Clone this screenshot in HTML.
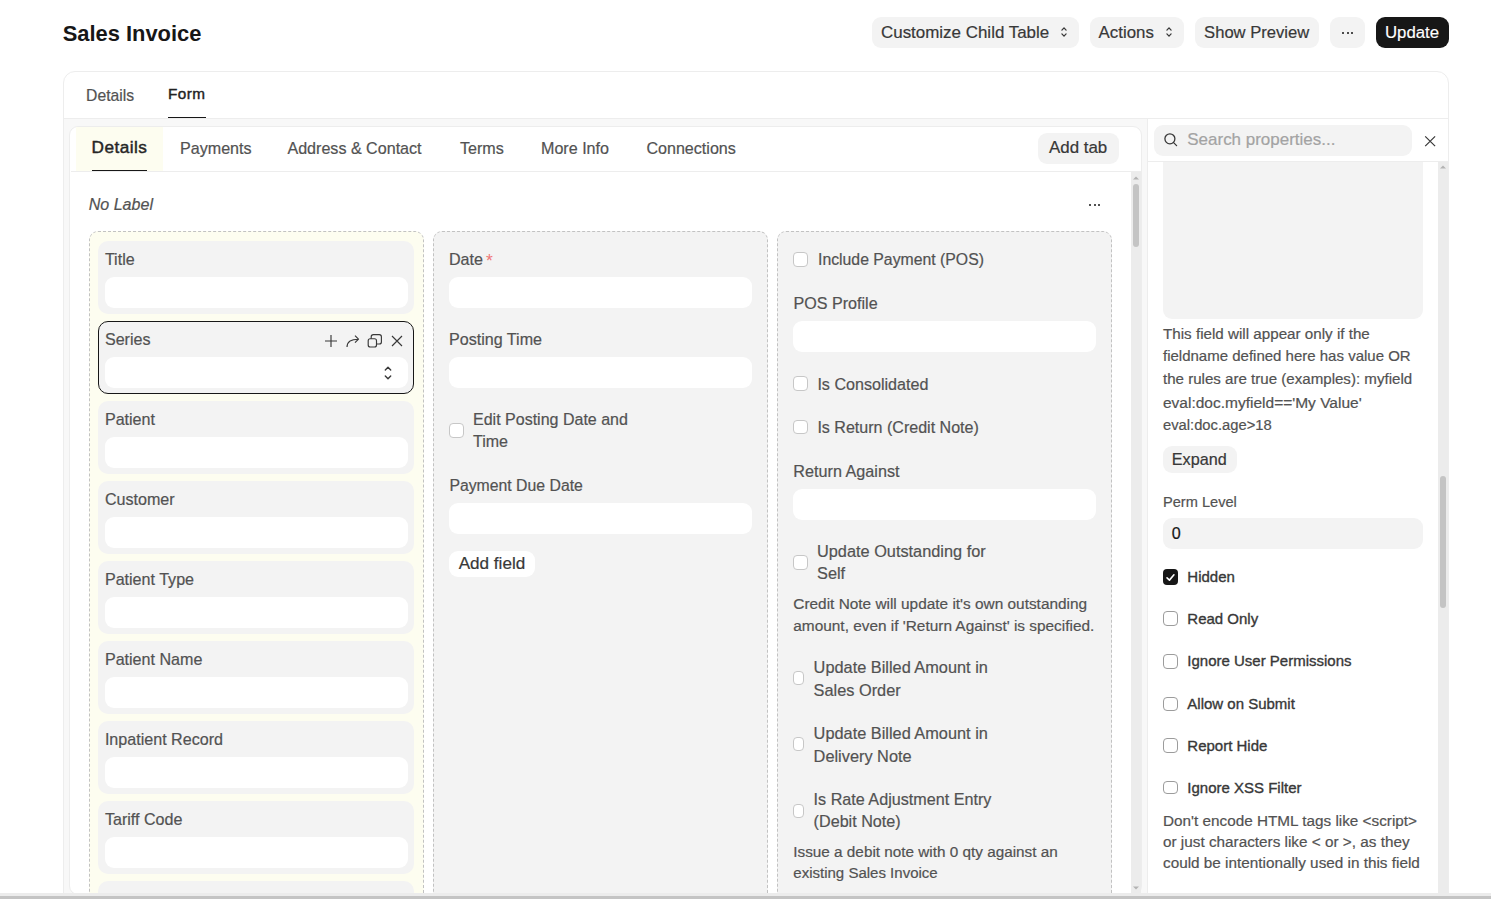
<!DOCTYPE html>
<html><head><meta charset="utf-8"><style>
html,body{margin:0;padding:0;}
body{width:1491px;height:899px;overflow:hidden;position:relative;background:#fff;font-family:"Liberation Sans",sans-serif;}
.t{position:absolute;white-space:nowrap;}
.b{position:absolute;}
</style></head><body>
<div class="t" style="left:62.70px;top:19.52px;font-size:21.9px;line-height:27.38px;color:#171717;font-weight:700;">Sales Invoice</div>
<div class="b" style="left:872.00px;top:17.00px;width:206.50px;height:31.00px;background:#f3f3f3;border-radius:9px;"></div>
<div class="t" style="left:881.00px;top:21.53px;font-size:16.95px;line-height:21.19px;color:#383838;-webkit-text-stroke:0.2px #383838;">Customize Child Table</div>
<svg class="b" style="left:1058.6px;top:25.299999999999997px" width="10" height="14" viewBox="0 0 10 14"><path d="M2.9 5.1 L5 2.8 L7.1 5.1 M2.9 8.9 L5 11.2 L7.1 8.9" fill="none" stroke="#383838" stroke-width="1.25" stroke-linecap="round" stroke-linejoin="round"/></svg>
<div class="b" style="left:1090.20px;top:17.00px;width:93.50px;height:31.00px;background:#f3f3f3;border-radius:9px;"></div>
<div class="t" style="left:1098.60px;top:21.63px;font-size:16.85px;line-height:21.06px;color:#383838;-webkit-text-stroke:0.2px #383838;">Actions</div>
<svg class="b" style="left:1163.6px;top:25.299999999999997px" width="10" height="14" viewBox="0 0 10 14"><path d="M2.9 5.1 L5 2.8 L7.1 5.1 M2.9 8.9 L5 11.2 L7.1 8.9" fill="none" stroke="#383838" stroke-width="1.25" stroke-linecap="round" stroke-linejoin="round"/></svg>
<div class="b" style="left:1195.20px;top:17.00px;width:123.60px;height:31.00px;background:#f3f3f3;border-radius:9px;"></div>
<div class="t" style="left:1204.10px;top:22.97px;font-size:16.6px;line-height:20.75px;color:#383838;-webkit-text-stroke:0.2px #383838;">Show Preview</div>
<div class="b" style="left:1330.30px;top:17.00px;width:34.40px;height:31.00px;background:#f3f3f3;border-radius:9px;"></div>
<div class="b" style="left:1342.45px;top:31.85px;width:1.90px;height:1.90px;background:#171717;border-radius:50%;"></div>
<div class="b" style="left:1346.75px;top:31.85px;width:1.90px;height:1.90px;background:#171717;border-radius:50%;"></div>
<div class="b" style="left:1351.15px;top:31.85px;width:1.90px;height:1.90px;background:#171717;border-radius:50%;"></div>
<div class="b" style="left:1376.10px;top:17.00px;width:72.70px;height:31.00px;background:#171717;border-radius:9px;"></div>
<div class="t" style="left:1385.00px;top:22.38px;font-size:16.8px;line-height:21.0px;color:#ffffff;-webkit-text-stroke:0.15px #ffffff;">Update</div>
<div class="b" style="left:63.00px;top:71.00px;width:1386.00px;height:889.00px;background:#ffffff;border:1px solid #ededed;border-radius:12px;box-sizing:border-box;"></div>
<div class="b" style="left:64.00px;top:119.00px;width:1384.00px;height:841.00px;background:#f8f8f8;"></div>
<div class="b" style="left:64.00px;top:118.00px;width:1384.00px;height:1.00px;background:#ededed;"></div>
<div class="t" style="left:86.10px;top:85.95px;font-size:15.7px;line-height:19.62px;color:#525252;-webkit-text-stroke:0.2px #525252;">Details</div>
<div class="t" style="left:168.00px;top:84.34px;font-size:15.3px;line-height:19.12px;color:#222222;-webkit-text-stroke:0.4px #222222;letter-spacing:0.45px;">Form</div>
<div class="b" style="left:168.00px;top:116.80px;width:38.00px;height:1.20px;background:#171717;"></div>
<div class="b" style="left:69.20px;top:125.60px;width:1072.80px;height:769.40px;background:#ffffff;border:1px solid #ededed;border-radius:9px;box-sizing:border-box;"></div>
<div class="b" style="left:71.00px;top:170.80px;width:1070.00px;height:1.00px;background:#ededed;"></div>
<div class="b" style="left:76.00px;top:126.60px;width:87.00px;height:44.20px;background:#fdfdf0;"></div>
<div class="t" style="left:91.60px;top:136.99px;font-size:17.2px;line-height:21.5px;color:#262626;-webkit-text-stroke:0.45px #262626;letter-spacing:0.45px;">Details</div>
<div class="b" style="left:92.00px;top:169.60px;width:55.00px;height:1.30px;background:#171717;"></div>
<div class="t" style="left:180.00px;top:138.36px;font-size:16.1px;line-height:20.12px;color:#525252;-webkit-text-stroke:0.2px #525252;">Payments</div>
<div class="t" style="left:287.40px;top:138.36px;font-size:16.1px;line-height:20.12px;color:#525252;-webkit-text-stroke:0.2px #525252;">Address &amp; Contact</div>
<div class="t" style="left:460.00px;top:138.36px;font-size:16.1px;line-height:20.12px;color:#525252;-webkit-text-stroke:0.2px #525252;">Terms</div>
<div class="t" style="left:541.00px;top:138.36px;font-size:16.1px;line-height:20.12px;color:#525252;-webkit-text-stroke:0.2px #525252;">More Info</div>
<div class="t" style="left:646.40px;top:138.36px;font-size:16.1px;line-height:20.12px;color:#525252;-webkit-text-stroke:0.2px #525252;">Connections</div>
<div class="b" style="left:1038.30px;top:133.30px;width:80.50px;height:30.40px;background:#f3f3f3;border-radius:9px;"></div>
<div class="t" style="left:1049.00px;top:137.18px;font-size:16.9px;line-height:21.12px;color:#383838;-webkit-text-stroke:0.2px #383838;">Add tab</div>
<div class="b" style="left:1131.00px;top:171.80px;width:10.00px;height:721.20px;background:#ececec;"></div>
<svg class="b" style="left:1131px;top:174px" width="10" height="8"><path d="M2 5.5 L5 2.5 L8 5.5 Z" fill="#b3b3b3"/></svg>
<svg class="b" style="left:1131px;top:884px" width="10" height="8"><path d="M2 2.5 L5 5.5 L8 2.5 Z" fill="#b3b3b3"/></svg>
<div class="b" style="left:1133.20px;top:183.70px;width:5.70px;height:63.00px;background:#c4c4c4;border-radius:3px;"></div>
<div class="t" style="left:88.70px;top:194.39px;font-size:16.07px;line-height:20.09px;color:#525252;font-style:italic;-webkit-text-stroke:0.2px #525252;">No Label</div>
<div class="b" style="left:1089.35px;top:203.75px;width:2.10px;height:2.10px;background:#171717;border-radius:50%;"></div>
<div class="b" style="left:1093.70px;top:203.75px;width:2.10px;height:2.10px;background:#171717;border-radius:50%;"></div>
<div class="b" style="left:1098.15px;top:203.75px;width:2.10px;height:2.10px;background:#171717;border-radius:50%;"></div>
<div class="b" style="left:89.40px;top:231.40px;width:335.00px;height:728.60px;background:#fdfdf0;border:1px dashed #c2c2c2;border-radius:9px;box-sizing:border-box;"></div>
<div class="b" style="left:433.40px;top:231.40px;width:335.00px;height:728.60px;background:#f3f3f3;border:1px dashed #c2c2c2;border-radius:9px;box-sizing:border-box;"></div>
<div class="b" style="left:777.40px;top:231.40px;width:335.00px;height:728.60px;background:#f3f3f3;border:1px dashed #c2c2c2;border-radius:9px;box-sizing:border-box;"></div>
<div class="b" style="left:98.00px;top:241.00px;width:316.00px;height:72.60px;background:#f3f3f3;border-radius:10px;"></div>
<div class="t" style="left:104.90px;top:249.46px;font-size:16.1px;line-height:20.12px;color:#525252;-webkit-text-stroke:0.2px #525252;">Title</div>
<div class="b" style="left:105.00px;top:277.00px;width:303.00px;height:31.00px;background:#ffffff;border-radius:9px;"></div>
<div class="b" style="left:98.00px;top:321.40px;width:316.00px;height:72.60px;background:#f3f3f3;border:1.4px solid #171717;border-radius:10px;box-sizing:border-box;"></div>
<div class="t" style="left:104.90px;top:329.46px;font-size:16.1px;line-height:20.12px;color:#525252;-webkit-text-stroke:0.2px #525252;">Series</div>
<div class="b" style="left:105.00px;top:357.00px;width:303.00px;height:31.00px;background:#ffffff;border-radius:9px;"></div>
<div class="b" style="left:98.00px;top:401.00px;width:316.00px;height:72.60px;background:#f3f3f3;border-radius:10px;"></div>
<div class="t" style="left:104.90px;top:409.46px;font-size:16.1px;line-height:20.12px;color:#525252;-webkit-text-stroke:0.2px #525252;">Patient</div>
<div class="b" style="left:105.00px;top:437.00px;width:303.00px;height:31.00px;background:#ffffff;border-radius:9px;"></div>
<div class="b" style="left:98.00px;top:481.00px;width:316.00px;height:72.60px;background:#f3f3f3;border-radius:10px;"></div>
<div class="t" style="left:104.90px;top:489.46px;font-size:16.1px;line-height:20.12px;color:#525252;-webkit-text-stroke:0.2px #525252;">Customer</div>
<div class="b" style="left:105.00px;top:517.00px;width:303.00px;height:31.00px;background:#ffffff;border-radius:9px;"></div>
<div class="b" style="left:98.00px;top:561.00px;width:316.00px;height:72.60px;background:#f3f3f3;border-radius:10px;"></div>
<div class="t" style="left:104.90px;top:569.46px;font-size:16.1px;line-height:20.12px;color:#525252;-webkit-text-stroke:0.2px #525252;">Patient Type</div>
<div class="b" style="left:105.00px;top:597.00px;width:303.00px;height:31.00px;background:#ffffff;border-radius:9px;"></div>
<div class="b" style="left:98.00px;top:641.00px;width:316.00px;height:72.60px;background:#f3f3f3;border-radius:10px;"></div>
<div class="t" style="left:104.90px;top:649.46px;font-size:16.1px;line-height:20.12px;color:#525252;-webkit-text-stroke:0.2px #525252;">Patient Name</div>
<div class="b" style="left:105.00px;top:677.00px;width:303.00px;height:31.00px;background:#ffffff;border-radius:9px;"></div>
<div class="b" style="left:98.00px;top:721.00px;width:316.00px;height:72.60px;background:#f3f3f3;border-radius:10px;"></div>
<div class="t" style="left:104.90px;top:729.46px;font-size:16.1px;line-height:20.12px;color:#525252;-webkit-text-stroke:0.2px #525252;">Inpatient Record</div>
<div class="b" style="left:105.00px;top:757.00px;width:303.00px;height:31.00px;background:#ffffff;border-radius:9px;"></div>
<div class="b" style="left:98.00px;top:801.00px;width:316.00px;height:72.60px;background:#f3f3f3;border-radius:10px;"></div>
<div class="t" style="left:104.90px;top:809.46px;font-size:16.1px;line-height:20.12px;color:#525252;-webkit-text-stroke:0.2px #525252;">Tariff Code</div>
<div class="b" style="left:105.00px;top:837.00px;width:303.00px;height:31.00px;background:#ffffff;border-radius:9px;"></div>
<div class="b" style="left:98.00px;top:881.00px;width:316.00px;height:72.60px;background:#f3f3f3;border-radius:10px;"></div>
<div class="b" style="left:105.00px;top:917.00px;width:303.00px;height:31.00px;background:#ffffff;border-radius:9px;"></div>
<svg class="b" style="left:322px;top:332px" width="84" height="18" viewBox="0 0 84 18"><g fill="none" stroke="#383838" stroke-width="1.15" stroke-linecap="butt" stroke-linejoin="round"><path d="M9 3 V15 M3 9 H15"/><path d="M25 15 C25 10.5 28.5 7.2 36.5 7.2 M33 3.7 L36.5 7.2 L33 10.7"/><rect x="46.2" y="6.7" width="8.3" height="8.3" rx="2"/><path d="M49.2 6.7 V4.8 Q49.2 2.6 51.4 2.6 H57.3 Q59.4 2.6 59.4 4.8 V10 Q59.4 12 57.3 12 H54.5"/><path d="M70 4 L80 14 M80 4 L70 14"/></g></svg>
<svg class="b" style="left:382px;top:365px" width="12" height="16" viewBox="0 0 12 16"><path d="M3.3 5 L6 2.3 L8.7 5 M3.3 11 L6 13.7 L8.7 11" fill="none" stroke="#383838" stroke-width="1.4" stroke-linecap="round" stroke-linejoin="round"/></svg>
<div class="t" style="left:449.00px;top:249.46px;font-size:16.1px;line-height:20.12px;color:#525252;-webkit-text-stroke:0.2px #525252;">Date</div>
<div class="t" style="left:486.00px;top:251.00px;font-size:17.5px;line-height:21.88px;color:#f07878;">*</div>
<div class="b" style="left:449.00px;top:277.00px;width:303.00px;height:31.00px;background:#ffffff;border-radius:9px;"></div>
<div class="t" style="left:449.00px;top:329.46px;font-size:16.1px;line-height:20.12px;color:#525252;-webkit-text-stroke:0.2px #525252;">Posting Time</div>
<div class="b" style="left:449.00px;top:357.00px;width:303.00px;height:31.00px;background:#ffffff;border-radius:9px;"></div>
<div class="b" style="left:449.40px;top:423.20px;width:14.60px;height:14.80px;background:#ffffff;border:1px solid #c7c7c7;border-radius:4px;box-sizing:border-box;"></div>
<div class="t" style="left:473.00px;top:408.74px;font-size:16.02px;line-height:20.02px;color:#525252;-webkit-text-stroke:0.2px #525252;">Edit Posting Date and</div>
<div class="t" style="left:473.00px;top:431.34px;font-size:16.02px;line-height:20.02px;color:#525252;-webkit-text-stroke:0.2px #525252;">Time</div>
<div class="t" style="left:449.40px;top:475.94px;font-size:15.81px;line-height:19.76px;color:#525252;-webkit-text-stroke:0.2px #525252;">Payment Due Date</div>
<div class="b" style="left:449.00px;top:503.10px;width:303.00px;height:30.50px;background:#ffffff;border-radius:9px;"></div>
<div class="b" style="left:449.00px;top:551.10px;width:86.00px;height:26.40px;background:#ffffff;border-radius:9px;"></div>
<div class="t" style="left:458.70px;top:553.18px;font-size:17.1px;line-height:21.38px;color:#383838;-webkit-text-stroke:0.2px #383838;">Add field</div>
<div class="b" style="left:793.20px;top:252.00px;width:14.50px;height:14.60px;background:#ffffff;border:1px solid #c7c7c7;border-radius:4px;box-sizing:border-box;"></div>
<div class="t" style="left:818.00px;top:249.85px;font-size:15.8px;line-height:19.75px;color:#525252;-webkit-text-stroke:0.2px #525252;">Include Payment (POS)</div>
<div class="t" style="left:793.50px;top:293.06px;font-size:16.1px;line-height:20.12px;color:#525252;-webkit-text-stroke:0.2px #525252;">POS Profile</div>
<div class="b" style="left:793.00px;top:321.00px;width:303.00px;height:31.00px;background:#ffffff;border-radius:9px;"></div>
<div class="b" style="left:793.20px;top:376.40px;width:14.50px;height:14.20px;background:#ffffff;border:1px solid #c7c7c7;border-radius:4px;box-sizing:border-box;"></div>
<div class="t" style="left:817.40px;top:373.75px;font-size:16.11px;line-height:20.14px;color:#525252;-webkit-text-stroke:0.2px #525252;">Is Consolidated</div>
<div class="b" style="left:793.20px;top:420.40px;width:14.50px;height:14.10px;background:#ffffff;border:1px solid #c7c7c7;border-radius:4px;box-sizing:border-box;"></div>
<div class="t" style="left:817.40px;top:417.40px;font-size:16.06px;line-height:20.07px;color:#525252;-webkit-text-stroke:0.2px #525252;">Is Return (Credit Note)</div>
<div class="t" style="left:793.30px;top:461.26px;font-size:16.2px;line-height:20.25px;color:#525252;-webkit-text-stroke:0.2px #525252;">Return Against</div>
<div class="b" style="left:793.00px;top:489.00px;width:303.00px;height:30.70px;background:#ffffff;border-radius:9px;"></div>
<div class="b" style="left:793.30px;top:555.40px;width:14.40px;height:14.30px;background:#ffffff;border:1px solid #c7c7c7;border-radius:4px;box-sizing:border-box;"></div>
<div class="t" style="left:817.00px;top:540.65px;font-size:16.32px;line-height:20.4px;color:#525252;-webkit-text-stroke:0.2px #525252;">Update Outstanding for</div>
<div class="t" style="left:817.00px;top:562.95px;font-size:16.32px;line-height:20.4px;color:#525252;-webkit-text-stroke:0.2px #525252;">Self</div>
<div class="t" style="left:793.30px;top:594.14px;font-size:15.4px;line-height:19.25px;color:#525252;-webkit-text-stroke:0.2px #525252;">Credit Note will update it's own outstanding</div>
<div class="t" style="left:793.30px;top:615.84px;font-size:15.4px;line-height:19.25px;color:#525252;-webkit-text-stroke:0.2px #525252;">amount, even if 'Return Against' is specified.</div>
<div class="b" style="left:793.30px;top:671.10px;width:11.00px;height:14.40px;background:#ffffff;border:1px solid #c7c7c7;border-radius:4px;box-sizing:border-box;"></div>
<div class="t" style="left:813.60px;top:657.42px;font-size:16.34px;line-height:20.43px;color:#525252;-webkit-text-stroke:0.2px #525252;">Update Billed Amount in</div>
<div class="t" style="left:813.60px;top:680.12px;font-size:16.34px;line-height:20.43px;color:#525252;-webkit-text-stroke:0.2px #525252;">Sales Order</div>
<div class="b" style="left:793.30px;top:737.10px;width:10.80px;height:14.40px;background:#ffffff;border:1px solid #c7c7c7;border-radius:4px;box-sizing:border-box;"></div>
<div class="t" style="left:813.60px;top:722.72px;font-size:16.34px;line-height:20.43px;color:#525252;-webkit-text-stroke:0.2px #525252;">Update Billed Amount in</div>
<div class="t" style="left:813.60px;top:745.72px;font-size:16.34px;line-height:20.43px;color:#525252;-webkit-text-stroke:0.2px #525252;">Delivery Note</div>
<div class="b" style="left:793.30px;top:803.50px;width:11.00px;height:14.00px;background:#ffffff;border:1px solid #c7c7c7;border-radius:4px;box-sizing:border-box;"></div>
<div class="t" style="left:813.60px;top:788.50px;font-size:16.16px;line-height:20.2px;color:#525252;-webkit-text-stroke:0.2px #525252;">Is Rate Adjustment Entry</div>
<div class="t" style="left:813.60px;top:811.10px;font-size:16.16px;line-height:20.2px;color:#525252;-webkit-text-stroke:0.2px #525252;">(Debit Note)</div>
<div class="t" style="left:793.30px;top:841.84px;font-size:15.3px;line-height:19.12px;color:#525252;-webkit-text-stroke:0.2px #525252;">Issue a debit note with 0 qty against an</div>
<div class="t" style="left:793.30px;top:864.21px;font-size:15.02px;line-height:18.77px;color:#525252;-webkit-text-stroke:0.2px #525252;">existing Sales Invoice</div>
<div class="b" style="left:1147.00px;top:119.00px;width:301.00px;height:841.00px;background:#ffffff;"></div>
<div class="b" style="left:1147.00px;top:119.00px;width:1.00px;height:774.00px;background:#ededed;"></div>
<div class="b" style="left:1148.00px;top:161.00px;width:300.00px;height:1.00px;background:#ededed;"></div>
<div class="b" style="left:1163.40px;top:140.00px;width:259.60px;height:178.50px;background:#f3f3f3;border-radius:9px;"></div>
<div class="b" style="left:1148.00px;top:119.00px;width:300.00px;height:42.00px;background:#ffffff;"></div>
<div class="b" style="left:1148.00px;top:161.00px;width:300.00px;height:1.00px;background:#ededed;"></div>
<div class="b" style="left:1154.00px;top:125.10px;width:258.00px;height:30.90px;background:#f3f3f3;border-radius:9px;"></div>
<svg class="b" style="left:1162px;top:131px" width="18" height="18" viewBox="0 0 18 18"><g fill="none" stroke="#383838" stroke-width="1.3" stroke-linecap="round"><circle cx="7.9" cy="7.8" r="5.0"/><path d="M11.6 11.6 L14.6 14.6"/></g></svg>
<div class="t" style="left:1187.30px;top:129.00px;font-size:16.98px;line-height:21.23px;color:#a3a3a3;-webkit-text-stroke:0.2px #a3a3a3;">Search properties...</div>
<svg class="b" style="left:1422px;top:133px" width="16" height="16" viewBox="0 0 16 16"><path d="M3.2 3.3 L13.1 13.2 M13.1 3.3 L3.2 13.2" fill="none" stroke="#383838" stroke-width="1.2" stroke-linecap="butt"/></svg>
<div class="b" style="left:1438.20px;top:162.00px;width:10.30px;height:731.00px;background:#ececec;"></div>
<svg class="b" style="left:1438px;top:163.2px" width="10" height="8"><path d="M2 5.5 L5 2.5 L8 5.5 Z" fill="#b3b3b3"/></svg>
<div class="b" style="left:1440.00px;top:476.00px;width:6.00px;height:131.60px;background:#c4c4c4;border-radius:3px;"></div>
<div class="t" style="left:1163.00px;top:324.23px;font-size:15.2px;line-height:19.0px;color:#525252;-webkit-text-stroke:0.2px #525252;">This field will appear only if the</div>
<div class="t" style="left:1163.00px;top:347.33px;font-size:15.0px;line-height:18.75px;color:#525252;-webkit-text-stroke:0.2px #525252;">fieldname defined here has value OR</div>
<div class="t" style="left:1163.00px;top:370.43px;font-size:15.1px;line-height:18.88px;color:#525252;-webkit-text-stroke:0.2px #525252;">the rules are true (examples): myfield</div>
<div class="t" style="left:1163.00px;top:392.74px;font-size:15.5px;line-height:19.38px;color:#525252;-webkit-text-stroke:0.2px #525252;">eval:doc.myfield=='My Value'</div>
<div class="t" style="left:1163.00px;top:416.27px;font-size:14.75px;line-height:18.44px;color:#525252;-webkit-text-stroke:0.2px #525252;">eval:doc.age&gt;18</div>
<div class="b" style="left:1163.00px;top:446.40px;width:73.50px;height:27.10px;background:#f3f3f3;border-radius:9px;"></div>
<div class="t" style="left:1171.80px;top:449.26px;font-size:16.2px;line-height:20.25px;color:#383838;-webkit-text-stroke:0.2px #383838;">Expand</div>
<div class="t" style="left:1163.00px;top:492.92px;font-size:14.6px;line-height:18.25px;color:#525252;-webkit-text-stroke:0.2px #525252;">Perm Level</div>
<div class="b" style="left:1163.00px;top:518.20px;width:260.00px;height:30.80px;background:#f3f3f3;border-radius:9px;"></div>
<div class="t" style="left:1171.70px;top:522.96px;font-size:16.1px;line-height:20.12px;color:#171717;-webkit-text-stroke:0.2px #171717;">0</div>
<div class="b" style="left:1163.20px;top:569.20px;width:14.70px;height:15.60px;background:#171717;border-radius:4px;"></div>
<svg class="b" style="left:1163.2px;top:569.2px" width="14.7" height="15.6" viewBox="0 0 15 15"><path d="M4.1 8.6 L6.6 10.9 L11.2 5.4" fill="none" stroke="#fff" stroke-width="1.6" stroke-linecap="round" stroke-linejoin="round"/></svg>
<div class="t" style="left:1187.30px;top:567.63px;font-size:15.0px;line-height:18.75px;color:#383838;-webkit-text-stroke:0.35px #383838;">Hidden</div>
<div class="b" style="left:1163.20px;top:611.20px;width:14.70px;height:15.20px;background:#ffffff;border:1px solid #9c9c9c;border-radius:4px;box-sizing:border-box;"></div>
<div class="t" style="left:1187.30px;top:610.03px;font-size:15.0px;line-height:18.75px;color:#383838;-webkit-text-stroke:0.35px #383838;">Read Only</div>
<div class="b" style="left:1163.20px;top:653.50px;width:14.70px;height:15.20px;background:#ffffff;border:1px solid #9c9c9c;border-radius:4px;box-sizing:border-box;"></div>
<div class="t" style="left:1187.30px;top:651.93px;font-size:15.0px;line-height:18.75px;color:#383838;-webkit-text-stroke:0.35px #383838;">Ignore User Permissions</div>
<div class="b" style="left:1163.20px;top:696.60px;width:14.70px;height:14.30px;background:#ffffff;border:1px solid #9c9c9c;border-radius:4px;box-sizing:border-box;"></div>
<div class="t" style="left:1187.30px;top:694.63px;font-size:15.0px;line-height:18.75px;color:#383838;-webkit-text-stroke:0.35px #383838;">Allow on Submit</div>
<div class="b" style="left:1163.20px;top:738.40px;width:14.70px;height:14.20px;background:#ffffff;border:1px solid #9c9c9c;border-radius:4px;box-sizing:border-box;"></div>
<div class="t" style="left:1187.30px;top:736.53px;font-size:15.0px;line-height:18.75px;color:#383838;-webkit-text-stroke:0.35px #383838;">Report Hide</div>
<div class="b" style="left:1163.20px;top:780.60px;width:14.70px;height:13.80px;background:#ffffff;border:1px solid #9c9c9c;border-radius:4px;box-sizing:border-box;"></div>
<div class="t" style="left:1187.30px;top:778.93px;font-size:15.0px;line-height:18.75px;color:#383838;-webkit-text-stroke:0.35px #383838;">Ignore XSS Filter</div>
<div class="t" style="left:1163.00px;top:810.54px;font-size:15.3px;line-height:19.12px;color:#525252;-webkit-text-stroke:0.2px #525252;">Don't encode HTML tags like &lt;script&gt;</div>
<div class="t" style="left:1163.00px;top:831.94px;font-size:15.3px;line-height:19.12px;color:#525252;-webkit-text-stroke:0.2px #525252;">or just characters like &lt; or &gt;, as they</div>
<div class="t" style="left:1163.00px;top:853.14px;font-size:15.3px;line-height:19.12px;color:#525252;-webkit-text-stroke:0.2px #525252;">could be intentionally used in this field</div>
<div class="b" style="left:0.00px;top:893.00px;width:1491.00px;height:3.00px;background:#ececec;"></div>
<div class="b" style="left:0.00px;top:896.00px;width:1491.00px;height:3.00px;background:#c4c4c4;"></div>
</body></html>
